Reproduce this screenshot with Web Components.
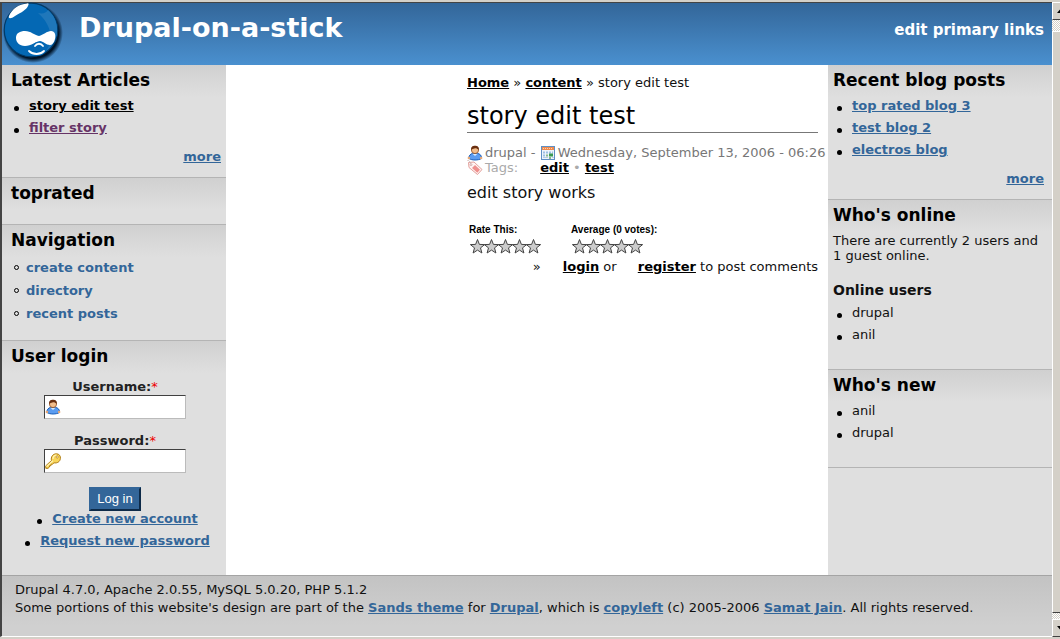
<!DOCTYPE html>
<html lang="en">
<head>
<meta charset="utf-8">
<title>story edit test | Drupal-on-a-stick</title>
<style>
html, body { margin: 0; }
body { background: #d4d0c8; color: #111; font: 13px/15px "DejaVu Sans", Verdana, sans-serif; }
</style>
</head>
<body>
<sands-page></sands-page>

<script>
const linkCss = `
  a { color: #336699; font-weight: bold; text-decoration: underline; }
  a.dark { color: #000; }
`;

const personSvg = `<svg width="16" height="16" viewBox="0 0 16 16" aria-hidden="true">
  <path d="M2 13.5C1.500 10.500 4 8.500 5.500 8.500h5C12.500 8.500 15 10.500 14.500 13.500 11 15.500 5 15.500 2 13.500Z" fill="#5b9cf0" stroke="#1c5fb8"/>
  <path d="M5.500 8.800 8 11l2.500-2.200Z" fill="#d8ecff"/>
  <circle cx="1.900" cy="13" r="1.300" fill="#e7a877"/><circle cx="14.100" cy="13" r="1.300" fill="#e7a877"/>
  <circle cx="8" cy="5" r="3.600" fill="#f2bd8b" stroke="#8a4a1c" stroke-width=".8"/>
  <path d="M4.200 5C3.800 2 5.500.8 8 .8S12.200 2 11.800 5C10.500 3.600 9 3.200 7.500 3.400 6 3.500 5 4 4.200 5Z" fill="#6a2f10"/></svg>`;
const keySvg = `<svg width="16" height="16" viewBox="0 0 16 16" aria-hidden="true">
  <path d="M6.500 7.500C5.500 4 8 .8 11.300.8c2.900 0 4.500 2.300 4.100 4.800C15 8.800 12 10.500 9 9.800L7.500 11.200H6v1.500H4.500V14L3 15.300H.8V12.800Z" fill="#f8d559" stroke="#b07d13"/>
  <path d="M1.500 13.600 7.800 7.800" stroke="#fff3b5" stroke-width="1.200"/>
  <path d="M8 6C8 3.500 9.500 2 11.500 2" fill="none" stroke="#fff3b5" stroke-width="1.200"/>
  <circle cx="12.200" cy="4" r="1.100" fill="#fff" stroke="#b07d13" stroke-width=".7"/></svg>`;
const calendarSvg = `<svg width="16" height="16" viewBox="0 0 16 16" aria-hidden="true">
  <rect x="1.500" y="1.500" width="13" height="13" fill="#eef4fb" stroke="#5f8fc4"/>
  <path d="M2 2h12v3H2z" fill="#f08a4c"/><path d="M3 3.500h10" stroke="#fbd0b5" stroke-dasharray="1 1"/>
  <path d="M3 6.500h2v2H3zM6 6.500h2v2H6zM9 6.500h2v2H9zM3 9.500h2v2H3zM12 6.500h1v2h-1z" fill="#9dbfe3"/>
  <path d="M6 9.500h2v2H6zM9 12h2v2H9z" fill="#8cb98b"/><path d="M9 8.500h4v3H9z" fill="#3b9a54"/><path d="M3 12.500h5M12 12.500h2" stroke="#b7cde6"/></svg>`;
const tagSvg = `<svg width="16" height="16" viewBox="0 0 16 16" aria-hidden="true">
  <path d="M1.500 2.500 7 2l8 7.500-4.500 5L2 7.500Z" fill="#fff4f3" stroke="#e3a19c"/>
  <path d="M8 5 13 9.700 10.300 12.700 5 8Z" fill="#ee8f8d"/>
  <circle cx="4" cy="4.700" r="1" fill="#fff" stroke="#c99" stroke-width=".7"/>
  <path d="M0 0c2 .2 3.500 2 4 4.500" fill="none" stroke="#c9b3b1" stroke-width=".8"/></svg>`;
const starSvg = `<svg viewBox="0 0 17 17" aria-hidden="true"><path d="M8.500 1.500 10.400 6.400 15.600 6.600 11.500 9.900 12.900 15 8.500 12.100 4.100 15 5.500 9.900 1.400 6.600 6.600 6.400Z"/></svg>`;

function define(name, html) {
  const template = document.createElement("template");
  template.innerHTML = html;
  customElements.define(name, class extends HTMLElement {
    constructor() {
      super();
      this.attachShadow({ mode: "open" }).append(template.content.cloneNode(true));
    }
  });
}

define("site-header", `<style>
  :host { display: flex; align-items: flex-start; height: 62px; padding-right: 8px;
    background: linear-gradient(#336699, #4a90cf); color: #fff; }
  svg { flex: none; margin-top: -1px; }
  h1 { flex: 1; margin: 9px 0 0 15px; font-size: 27px; line-height: 32px; }
  a { margin-top: 17px; color: #fff; font-size: 15px; line-height: 20px; font-weight: bold; text-decoration: none; }
</style>
<svg width="62" height="62" viewBox="0 0 62 62" role="img" aria-label="Drupal">
  <defs><radialGradient id="shade" cx=".5" cy=".5" r=".5"><stop offset=".85" stop-color="#001428"/><stop offset="1" stop-color="#001428" stop-opacity="0"/></radialGradient></defs>
  <circle cx="31" cy="31" r="30" fill="url(#shade)"/>
  <circle cx="29" cy="28" r="26.800" fill="#0468b4" stroke="#013a68" stroke-width="1.200"/>
  <path d="M46 8C59 19 58 40 44 49 51 40 51 24 36 11 41 12 44 11 46 8Z" fill="#1f77ba"/>
  <path d="M25 1.500C17 2 10 7 7 14c-1 3 2 3 6 0C20 10 24 8 26 4c1-2 1-3-1-2.500Z" fill="#fff"/>
  <path d="M14 36c0-5 4-7 9-7 6 0 9 4 14 5 4-1 8-5 12-5 4 0 5 4 4 8-1 4-3 6-5 6-4 0-7-4-10-4-3 0-9 5-15 5-6 0-9-4-9-8Z" fill="#fff"/>
  <path d="M32 45c2-4 7-4 9 0M27 49c4 4 11 4 15 0" fill="none" stroke="#0468b4" stroke-width="4"/>
  <path d="M33 44c2-3 6-3 8 0M27 49c4 4 11 4 15 0" fill="none" stroke="#fff" stroke-width="1.800" stroke-linecap="round"/>
</svg>
<h1>Drupal-on-a-stick</h1>
<a href="#primary">edit primary links</a>`);

define("side-block", `<style>
  :host { display: block; padding: 5px var(--pad-right) 0 var(--pad-left);
    border-bottom: 1px solid #b4b4b4;
    background: linear-gradient(#d0d0d0, #dfdfdf 32px); }
  :host(:last-of-type) { border-bottom: var(--last-border, 1px solid #b4b4b4); }
  ::slotted(h2) { margin: 0 0 5px; font-size: 17px; line-height: 20px; color: #000; }
</style><slot name="title"></slot><slot></slot>`);

define("login-form", `<style>${linkCss}
  :host { display: block; }
  form { display: flex; flex-direction: column; align-items: center; padding: 7px 2px 0 0; }
  label { margin-top: 1px; font-weight: bold; line-height: 16px; color: #222; }
  label span { color: #e00; font-weight: normal; }
  .field { position: relative; display: flex; width: 142px; margin-bottom: 13px; }
  .field svg { position: absolute; left: 1px; top: 4px; }
  input { box-sizing: border-box; width: 100%; height: 24px; padding: 2px 2px 2px 20px; margin: 0;
    border: 1px solid; border-color: #404040 #bbb #bbb #404040; background: #fff; font: inherit; }
  button { box-sizing: border-box; width: 52px; height: 24px; margin: 1px 0 0; padding: 0;
    border: 2px solid; border-color: #336699 #0d2a48 #0d2a48 #336699; background: #336699; color: #fff;
    font: 13px/18px "Liberation Sans", Arial, sans-serif; }
</style>
<form>
  <label for="user">Username:<span>*</span></label>
  <div class="field"><input id="user" type="text" required>${personSvg}</div>
  <label for="pass">Password:<span>*</span></label>
  <div class="field"><input id="pass" type="password" required>${keySvg}</div>
  <button type="submit">Log in</button>
</form>`);

define("star-rating", `<style>
  :host { display: block; color: #000; font: bold 10px/12px "Liberation Sans", Arial, sans-serif; }
  div { display: flex; margin-top: 2px; }
  svg { flex: none; width: 17px; height: 17px; margin-right: -3px; fill: #ccc; stroke: #444; }
</style><slot></slot><div>${starSvg.repeat(5)}</div>`);

define("article-view", `<style>${linkCss}
  :host { display: block; flex: 0 1 351px; min-width: 0; white-space: nowrap; }
  nav { line-height: 16px; }
  h1 { margin: 9px 0 12px; border-bottom: 1px solid #777; font-size: 24px; line-height: 32px; font-weight: normal; color: #000; }
  .meta { display: flex; align-items: center; height: 15px; color: #777; white-space: pre; }
  .meta svg { flex: none; margin-right: 2px; }
  .tags { color: #aaa; }
  .tags a:first-of-type { margin-left: 22px; }
  p { margin: 8px 0 21px; font-size: 16px; line-height: 20px; }
  .votes { display: flex; gap: 32px; padding-left: 2px; }
  .comments { display: flex; justify-content: flex-end; margin-top: 4px; line-height: 16px; white-space: pre; }
  .comments a { margin-left: 22px; }
  .comments a + a { margin-left: 17px; }
</style>
<nav><a class="dark" href="#home">Home</a> » <a class="dark" href="#content">content</a> » story edit test</nav>
<h1>story edit test</h1>
<div class="meta">${personSvg}<span>drupal - </span>${calendarSvg}<span>Wednesday, September 13, 2006 - 06:26</span></div>
<div class="meta tags">${tagSvg}<span>Tags:</span><a class="dark" href="#edit">edit</a> • <a class="dark" href="#test">test</a></div>
<p>edit story works</p>
<div class="votes"><star-rating>Rate This:</star-rating><star-rating>Average (0 votes):</star-rating></div>
<div class="comments">»<a class="dark" href="#login">login</a> or <a class="dark" href="#register">register</a> to post comments</div>`);

define("site-footer", `<style>${linkCss}
  :host { display: block; padding: 5px 13px 19px; border-top: 1px solid #a4a4a4;
    background: linear-gradient(#c3c3c3, #d0d0d0 50px); line-height: 18px; color: #111; }
  div { min-height: 18px; }
</style>
<div>Drupal 4.7.0, Apache 2.0.55, MySQL 5.0.20, PHP 5.1.2</div>
<div>Some portions of this website's design are part of the <a href="#sands">Sands theme</a> for <a href="#drupal">Drupal</a>, which is <a href="#copyleft">copyleft</a> (c) 2005-2006 <a href="#samat">Samat Jain</a>. All rights reserved.</div>`);

define("scroll-rail", `<style>
  :host { display: flex; flex-direction: column; box-sizing: border-box; width: 8px; overflow: hidden;
    background: repeating-conic-gradient(#fff 0 25%, #d4d0c8 0 50%) 0 0 / 2px 2px; }
  div { flex: none; box-sizing: border-box; width: 16px; height: 18px; background: #d4d0c8;
    border: 1px solid; border-color: #fff #404040 #404040 #fff; }
  .thumb { flex: 1; height: auto; margin: 11px 0 6px; }
  svg { display: block; margin: 6px 0 0 4px; }
</style>
<div><svg width="7" height="4"><path d="M0 4 3.500 0 7 4Z"/></svg></div>
<div class="thumb"></div>
<div><svg width="7" height="4"><path d="M0 0 3.500 4 7 0Z"/></svg></div>`);

define("sands-page", `<style>${linkCss}
  :host { display: grid; grid-template-columns: minmax(0, 1fr) auto; box-sizing: border-box; min-height: 100vh;
    padding: 2px 0; }
  .page { display: flex; flex-direction: column; border: solid #444; border-width: 1px 0 0 2px; border-bottom: 1px solid #fff; }
  .columns { flex: 1; display: grid; grid-template-columns: 224px minmax(0, 1fr) 224px; background: #fff; }
  aside { background: #dfdfdf; }
  .left { --pad-left: 9px; --pad-right: 5px; --last-border: 0; }
  .right { --pad-left: 5px; --pad-right: 8px; }
  main { display: flex; justify-content: flex-end; padding: 10px 10px 0; }
  ul { margin: 0; padding: 0 0 0 18px; list-style: none; line-height: 22px; }
  .right ul { padding-left: 19px; }
  li::before { content: ""; display: inline-block; width: 5px; height: 5px; margin: 0 10px -1px -15px;
    border-radius: 50%; background: #000; }
  ul.nav { padding: 1px 0 15px 15px; line-height: 23px; }
  .nav a { text-decoration: none; }
  .nav li::before { box-sizing: border-box; margin: 0 7px 2px -12px; border: 1px solid #000; background: none; }
  ul.centered { margin-top: -3px; text-align: center; padding-bottom: 23px; }
  a.visited { color: #663366; }
  .more { padding: 10px 0 13px; text-align: right; }
  .empty { height: 16px; }
  p { margin: 8px 0 18px; }
  h3 { margin: 0 0 3px; font-size: 14px; line-height: 18px; color: #111; }
  ul.people { padding-bottom: 23px; }
</style>
<div class="page">
  <site-header></site-header>
  <div class="columns">
    <aside class="left">
      <side-block><h2 slot="title">Latest Articles</h2>
        <ul><li><a class="dark" href="#story">story edit test</a></li><li><a class="visited" href="#filter">filter story</a></li></ul>
        <div class="more"><a href="#articles">more</a></div></side-block>
      <side-block><h2 slot="title">toprated</h2><div class="empty"></div></side-block>
      <side-block><h2 slot="title">Navigation</h2>
        <ul class="nav"><li><a href="#create">create content</a></li><li><a href="#directory">directory</a></li><li><a href="#recent">recent posts</a></li></ul></side-block>
      <side-block><h2 slot="title">User login</h2>
        <login-form></login-form>
        <ul class="centered"><li><a href="#register">Create new account</a></li><li><a href="#password">Request new password</a></li></ul></side-block>
    </aside>
    <main><article-view></article-view></main>
    <aside class="right">
      <side-block><h2 slot="title">Recent blog posts</h2>
        <ul><li><a href="#blog3">top rated blog 3</a></li><li><a href="#blog2">test blog 2</a></li><li><a href="#electros">electros blog</a></li></ul>
        <div class="more"><a href="#blogs">more</a></div></side-block>
      <side-block><h2 slot="title">Who's online</h2>
        <p>There are currently 2 users and 1 guest online.</p>
        <h3>Online users</h3>
        <ul class="people"><li>drupal</li><li>anil</li></ul></side-block>
      <side-block><h2 slot="title">Who's new</h2>
        <ul class="people"><li>anil</li><li>drupal</li></ul></side-block>
    </aside>
  </div>
  <site-footer></site-footer>
</div>
<scroll-rail></scroll-rail>`);
</script>
</body>
</html>
